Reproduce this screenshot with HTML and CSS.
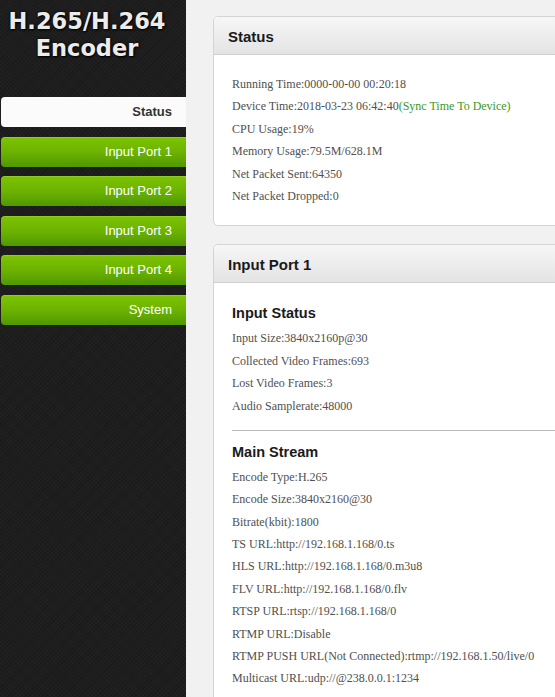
FILE: index.html
```html
<!DOCTYPE html>
<html lang="en">
<head>
    <meta charset="UTF-8">
    <meta name="viewport" content="width=device-width, initial-scale=1.0">
    <title>H.265/H.264 Encoder</title>
    <link rel="stylesheet" href="styles.css">
</head>
<body>
    <aside class="sidebar">
        <h1 class="logo">H.265/H.264<br>Encoder</h1>
        <ul class="menu">
            <li><a href="#" class="active">Status</a></li>
            <li><a href="#">Input Port 1</a></li>
            <li><a href="#">Input Port 2</a></li>
            <li><a href="#">Input Port 3</a></li>
            <li><a href="#">Input Port 4</a></li>
            <li><a href="#">System</a></li>
        </ul>
    </aside>
    <main class="content">
        <section class="panel">
            <h2 class="panel-title">Status</h2>
            <div class="panel-body">
                <p>Running Time:0000-00-00 00:20:18</p>
                <p>Device Time:2018-03-23 06:42:40<a href="#" class="sync">(Sync Time To Device)</a></p>
                <p>CPU Usage:19%</p>
                <p>Memory Usage:79.5M/628.1M</p>
                <p>Net Packet Sent:64350</p>
                <p>Net Packet Dropped:0</p>
            </div>
        </section>
        <section class="panel">
            <h2 class="panel-title">Input Port 1</h2>
            <div class="panel-body">
                <h3>Input Status</h3>
                <p>Input Size:3840x2160p@30</p>
                <p>Collected Video Frames:693</p>
                <p>Lost Video Frames:3</p>
                <p>Audio Samplerate:48000</p>
                <hr>
                <h3>Main Stream</h3>
                <p>Encode Type:H.265</p>
                <p>Encode Size:3840x2160@30</p>
                <p>Bitrate(kbit):1800</p>
                <p>TS URL:http://192.168.1.168/0.ts</p>
                <p>HLS URL:http://192.168.1.168/0.m3u8</p>
                <p>FLV URL:http://192.168.1.168/0.flv</p>
                <p>RTSP URL:rtsp://192.168.1.168/0</p>
                <p>RTMP URL:Disable</p>
                <p>RTMP PUSH URL(Not Connected):rtmp://192.168.1.50/live/0</p>
                <p>Multicast URL:udp://@238.0.0.1:1234</p>
            </div>
        </section>
    </main>
</body>
</html>
```
FILE: styles.css
```css
/* styles.css */
body {
    margin: 0;
    padding: 0;
    display: flex;
    min-height: 697px;
    overflow: hidden;
    background-color: #f1f1f1;
    font-family: "Liberation Serif", serif;
}

.sidebar {
    flex: none;
    width: 186px;
    background-color: #1e1e1e;
    background-image:
        repeating-linear-gradient(45deg, rgba(255, 255, 255, 0.012) 0 1px, transparent 1px 3px),
        repeating-linear-gradient(-45deg, rgba(0, 0, 0, 0.15) 0 1px, transparent 1px 3px);
}

.logo {
    margin: 0;
    padding: 8px 12px 0 0;
    height: 92px;
    box-sizing: border-box;
    text-align: center;
    font-family: "DejaVu Sans", sans-serif;
    font-weight: bold;
    font-size: 22.5px;
    line-height: 27px;
    color: #ececec;
    text-shadow: 1px 1px 2px #000, 0 0 3px rgba(0, 0, 0, 0.8);
}

.menu {
    list-style: none;
    margin: 0;
    padding: 5px 0 0 1px;
    display: flex;
    flex-direction: column;
    gap: 9.6px;
}

.menu a {
    display: block;
    height: 30px;
    line-height: 30px;
    padding-right: 14px;
    text-align: right;
    text-decoration: none;
    font-family: "Liberation Sans", sans-serif;
    font-size: 13px;
    color: #fff;
    border-radius: 4px 0 0 4px;
    background: linear-gradient(to bottom, #7cc400 0%, #6db300 50%, #4f9800 100%);
    box-shadow: inset 0 1px 0 rgba(255, 255, 255, 0.15);
}

.menu a.active {
    background: #fbfbfb;
    color: #333;
    font-weight: bold;
    box-shadow: none;
}

.content {
    flex: none;
    width: 400px;
    padding: 16px 0 0 27px;
}

.panel {
    background-color: #fff;
    border: 1px solid #d4d4d4;
    border-radius: 5px;
    margin-bottom: 18px;
    overflow: hidden;
}

.panel-title {
    margin: 0;
    height: 37px;
    line-height: 39px;
    padding-left: 14px;
    font-family: "Liberation Sans", sans-serif;
    font-size: 15px;
    color: #1a1a1a;
    background: linear-gradient(to bottom, #f6f6f6, #e4e4e4);
    border-bottom: 1px solid #cfcfcf;
}

.panel-body {
    padding: 18px 0 18px 18px;
}

.panel-body p {
    margin: 0;
    height: 22.4px;
    line-height: 22.4px;
    font-size: 12px;
    color: #505050;
}

.panel-body h3 {
    margin: 0;
    height: 26px;
    line-height: 24px;
    font-family: "Liberation Sans", sans-serif;
    font-size: 14.5px;
    color: #1a1a1a;
}

.panel-body hr {
    border: none;
    border-top: 1px solid #bbb;
    margin: 13px 0 9px 0;
}

.sync {
    color: #3a9a1c;
    text-decoration: none;
}
```
